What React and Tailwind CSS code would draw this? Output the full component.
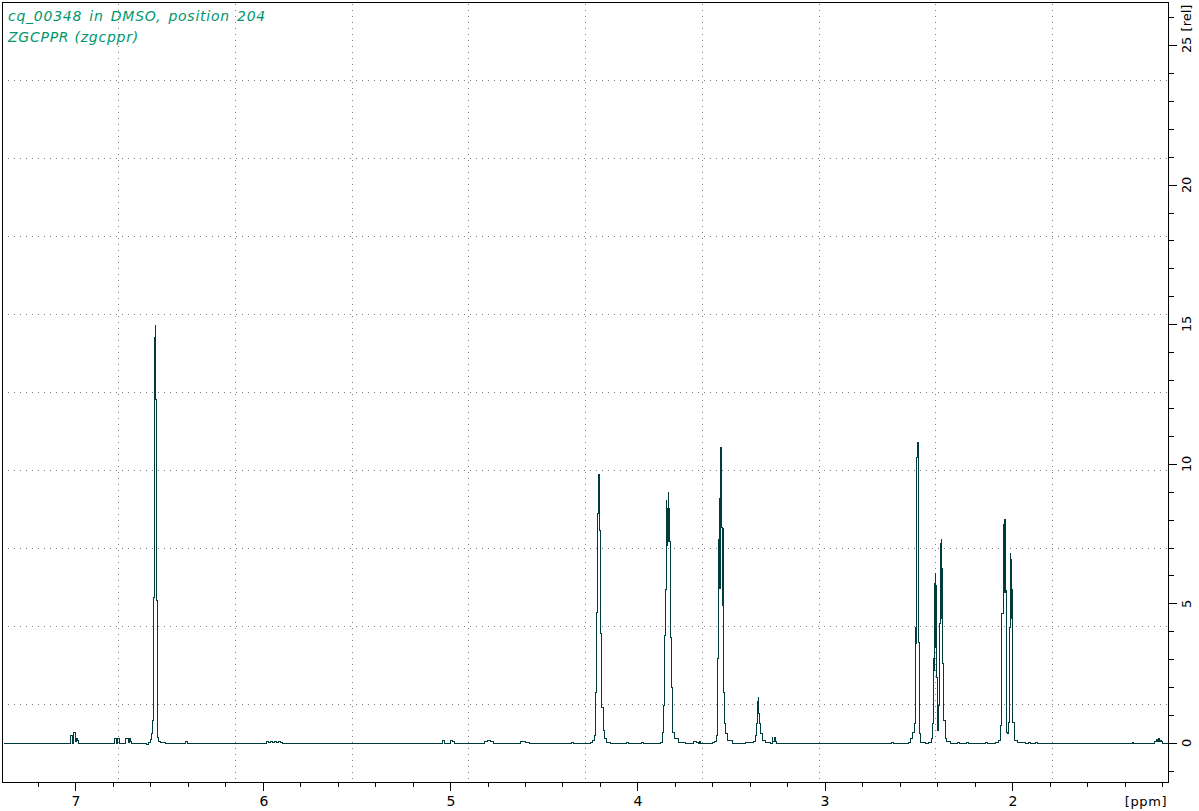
import React from 'react'

// plot frame, in page pixels
const LEFT = 2
const RIGHT = 1168
const TOP = 2
const BOTTOM = 782

const GRID_X = [118, 235, 352, 468, 585, 702, 819, 935, 1052]
const GRID_Y = [80, 158, 236, 314, 392, 470, 548, 626, 704]

const PPM_LABELS = [
    { x: 76, text: '7' },
    { x: 264, text: '6' },
    { x: 451, text: '5' },
    { x: 638, text: '4' },
    { x: 825, text: '3' },
    { x: 1013, text: '2' },
]

const REL_LABELS = [
    { y: 743, text: '0' },
    { y: 604, text: '5' },
    { y: 464, text: '10' },
    { y: 324, text: '15' },
    { y: 185, text: '20' },
    { y: 45, text: '25' },
]

// the spectrum, left to right, traced off the picture.
const TRACE = [
    [3, 743], [69, 743], [70, 735], [71, 735], [72, 743], [73, 732], [74, 732], [75, 741], [76, 738], [77, 740], [78, 743],
    [113, 743], [114, 738], [115, 738], [116, 743], [117, 738], [118, 738], [119, 743],
    [124, 743], [125, 738], [127, 738], [128, 742], [129, 738], [130, 741], [131, 743],
    [145, 743], [146, 744], [148, 742], [150, 739], [151, 733], [152, 720], [153, 597], [154, 337], [155, 324], [155, 399], [156, 600], [157, 737], [158, 741], [160, 742], [165, 743],
    [183, 743], [185, 741], [187, 743],
    [265, 743], [266, 741], [268, 742], [270, 741], [272, 742], [274, 741], [276, 742], [278, 741], [280, 742], [282, 743],
    [441, 743], [442, 740], [444, 743], [449, 743], [450, 740], [452, 741], [454, 743],
    [481, 743], [484, 741], [487, 740], [490, 741], [493, 743],
    [516, 743], [520, 741], [525, 742], [529, 743],
    [570, 743], [571, 742], [573, 743], [588, 743],
    [590, 742], [592, 740], [594, 735], [595, 723], [595, 692], [596, 612], [597, 513], [598, 473], [598, 513], [599, 473], [599, 530],
    [600, 633], [601, 707], [603, 730], [604, 738], [606, 742], [610, 743],
    [625, 743], [626, 742], [628, 743],
    [640, 743], [641, 742], [643, 743],
    [660, 742], [662, 732], [663, 705], [664, 635], [665, 589], [666, 499], [666, 545], [667, 507], [667, 541], [668, 491], [668, 541], [669, 507], [669, 541], [670, 637],
    [671, 687], [672, 732], [674, 738], [678, 742], [685, 743],
    [691, 743], [693, 741], [696, 742], [698, 743], [699, 741], [700, 743],
    [712, 742], [714, 741], [716, 735], [717, 713], [717, 658], [718, 538], [718, 585], [719, 497], [719, 588], [720, 446], [720, 527], [721, 446], [721, 527], [722, 527], [722, 605],
    [723, 527], [723, 692], [724, 723], [725, 733], [727, 740], [732, 743],
    [745, 742], [753, 741], [755, 735], [756, 723], [757, 700], [757, 713], [758, 696], [758, 713], [759, 723], [760, 733], [762, 740], [765, 742], [770, 743],
    [771, 743], [772, 736], [772, 741], [774, 736], [774, 741], [775, 736], [775, 741], [776, 743],
    [889, 743], [891, 742], [893, 743],
    [905, 743], [908, 742], [910, 738], [912, 732], [914, 723], [915, 643], [915, 627], [916, 643], [916, 457], [917, 457], [917, 442], [918, 442], [918, 642], [919, 642], [919, 733], [920, 742], [925, 743],
    [928, 742], [931, 738], [932, 723], [933, 657], [933, 670], [934, 582], [934, 647], [935, 572], [935, 647], [936, 584], [936, 677], [937, 728], [937, 730], [938, 705], [939, 623], [940, 542], [940, 618], [941, 538], [941, 618], [942, 567], [942, 663], [943, 720], [945, 738], [946, 741], [950, 743],
    [955, 743], [957, 742], [959, 743], [964, 743], [966, 742], [968, 743], [983, 743], [985, 742], [987, 743],
    [995, 742], [998, 740], [1000, 725], [1001, 613], [1003, 523], [1003, 592], [1004, 518], [1004, 592], [1005, 518], [1005, 590], [1006, 590], [1006, 732], [1007, 733], [1008, 733],
    [1008, 722], [1009, 627], [1010, 552], [1010, 618], [1011, 558], [1011, 618], [1012, 588], [1012, 722], [1014, 740], [1017, 742], [1025, 743],
    [1027, 743], [1028, 742], [1030, 743], [1034, 743], [1035, 742], [1037, 743],
    [1131, 743], [1132, 742], [1133, 743],
    [1152, 743], [1154, 741], [1155, 741], [1156, 739], [1157, 741], [1158, 738], [1159, 741], [1160, 740], [1161, 741], [1162, 743], [1168, 743],
]

// sharp pixel steps: go across first, then down to the next point.
const tracePoints = TRACE.map(([x, y], i) => {
    const prev = TRACE[i - 1]
    const step = prev ? `${x + 0.5},${prev[1] + 0.5} ` : ''
    return `${step}${x + 0.5},${y + 0.5}`
}).join(' ')

const range = (start, end, step) => {
    const out = []
    for (let v = start; v <= end; v += step) out.push(v)
    return out
}

const Spectrum = () => {
    // minor ticks: 37.47px per 0.2 ppm, 27.92px per 1 rel unit.
    const xTicks = range(0, 30, 1).map(i => Math.round(1162 - i * 37.47)).filter(x => x > LEFT)
    const yTicks = range(-1, 26, 1).map(i => Math.round(743 - i * 27.92)).filter(y => y > TOP)

    return (
        <svg width="1199" height="811" className="block" shapeRendering="crispEdges">
            {/* dotted grid */}
            {GRID_X.map(x => (
                <line key={x} x1={x + 0.5} x2={x + 0.5} y1={4} y2={779} stroke="#808080" strokeDasharray="1 5" />
            ))}
            {GRID_Y.map(y => (
                <line key={y} x1={8} x2={1167} y1={y + 0.5} y2={y + 0.5} stroke="#808080" strokeDasharray="1 5" />
            ))}

            {/* spectrum */}
            <polyline points={tracePoints} fill="none" stroke="#003c3c" strokeWidth="1" />

            {/* frame */}
            <rect x={LEFT + 0.5} y={TOP + 0.5} width={RIGHT - LEFT} height={BOTTOM - TOP} fill="none" stroke="#000" />

            {/* bottom ticks, every 5th is a long one */}
            {xTicks.map(x => {
                const major = PPM_LABELS.some(l => Math.abs(l.x - x) <= 1)
                return <line key={x} x1={x + 0.5} x2={x + 0.5} y1={BOTTOM} y2={major ? 791 : 787} stroke="#000" />
            })}

            {/* right ticks */}
            {yTicks.map(y => {
                const major = REL_LABELS.some(l => Math.abs(l.y - y) <= 1)
                return <line key={y} x1={RIGHT} x2={major ? 1177 : 1174} y1={y + 0.5} y2={y + 0.5} stroke="#000" />
            })}

            {/* axis labels */}
            {PPM_LABELS.map(l => (
                <text key={l.text} x={l.x} y={806} textAnchor="middle" className="fill-black text-sm font-['DejaVu_Sans',sans-serif]">
                    {l.text}
                </text>
            ))}
            <text x={1146} y={806} textAnchor="middle" className="fill-black text-[13px] tracking-[0.6px] font-['DejaVu_Sans',sans-serif]">
                [ppm]
            </text>
            {REL_LABELS.map(l => (
                <text
                    key={l.text}
                    transform={`translate(1191 ${l.y}) rotate(-90)`}
                    textAnchor="middle"
                    className="fill-black text-[13px] tracking-[-0.4px] font-['DejaVu_Sans',sans-serif]"
                >
                    {l.text}
                </text>
            ))}
            <text transform="translate(1191 18) rotate(-90)" textAnchor="middle" className="fill-black text-[13px] font-['DejaVu_Sans',sans-serif]">
                [rel]
            </text>
        </svg>
    )
}

const App = () => {
    return (
        <div className="relative w-[1199px] h-[811px] bg-white overflow-hidden">
            <Spectrum />

            {/* sample title over the plot */}
            <div className="absolute left-2 top-[6px] text-[#00966e] italic text-sm leading-[21px] tracking-[0.75px] font-['DejaVu_Sans',sans-serif]">
                <div className="[word-spacing:2px]">cq_00348 in DMSO, position 204</div>
                <div>ZGCPPR (zgcppr)</div>
            </div>
        </div>
    )
}

export default App
